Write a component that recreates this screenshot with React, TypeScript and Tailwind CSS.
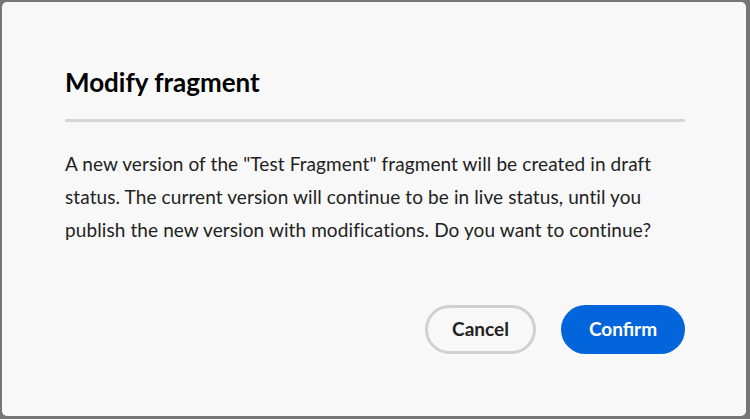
export default function App() {
  return (
    <div className="w-[750px] h-[419px] bg-[#767676] pl-[2px] pt-[2px] pr-[4px] pb-[3px]" style={{ fontFamily: 'Lato, "Noto Sans", sans-serif' }}>
      <div className="w-full h-full bg-[#f8f8f8] rounded-[5px] flex flex-col px-[63px] pt-[63px]">
        <h1 className="text-[26px] leading-[34px] font-bold text-[#000]">Modify fragment</h1>
        <div className="mt-[20px] h-[3px] bg-[#d5d5d5] rounded-full w-[620px]" />
        <p className="mt-[25px] text-[19px] leading-[33px] text-[#222] tracking-[0.1px]">
          A new version of the "Test Fragment" fragment will be created in draft status. The current version will continue to be in live status, until you publish the new version with modifications. Do you want to continue?
        </p>
        <div className="mt-[59px] flex justify-end gap-[25px] w-[620px]">
          <button className="h-[49px] w-[111px] rounded-full border-[3px] border-[#d0d0d0] text-[19px] font-bold text-[#222] bg-[#f8f8f8]">Cancel</button>
          <button className="h-[49px] w-[124px] rounded-full bg-[#0265dc] text-[19px] font-bold text-white">Confirm</button>
        </div>
      </div>
    </div>
  );
}
